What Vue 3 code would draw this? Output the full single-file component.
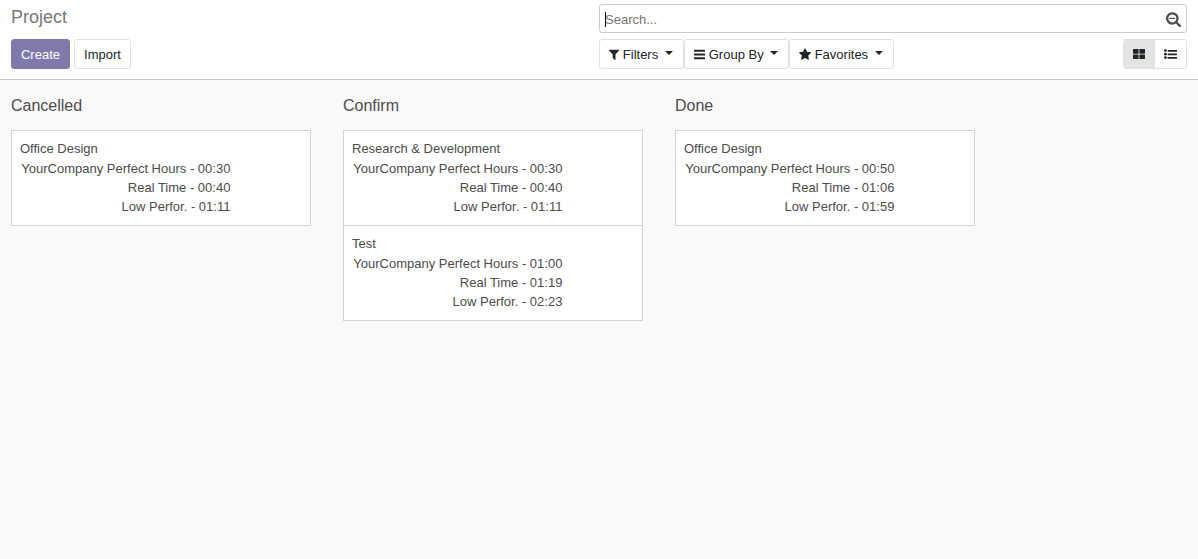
<script setup>
const bar = (y) => `M1664 ${y}v128q0 26-19 45t-45 19h-1408q-26 0-45-19t-19-45v-128q0-26 19-45t45-19h1408q26 0 45 19t19 45z`
const menus = [
  {
    label: 'Filters',
    cls: 'filters',
    box: '192 0 1408 1792',
    path: 'M1595 295q17 41-14 70l-493 493v742q0 42-39 59-13 5-25 5-27 0-45-19l-256-256q-19-19-19-45v-486l-493-493q-31-29-14-70 17-39 59-39h1280q42 0 59 39z',
  },
  { label: 'Group By', cls: 'group', box: '128 0 1536 1792', path: bar(1344) + bar(832) + bar(320) },
  {
    label: 'Favorites',
    cls: 'favorites',
    box: '64 0 1664 1792',
    path: 'M1728 647q0 22-26 48l-363 354 86 500q1 7 1 20 0 21-10.5 35.5t-30.5 14.5q-19 0-40-12l-449-236-449 236q-22 12-40 12-21 0-31.5-14.5t-10.5-35.5q0-6 2-20l86-500-364-354q-25-27-25-48 0-37 56-46l502-73 225-455q19-41 49-41t49 41l225 455 502 73q56 9 56 46z',
  },
]
const columns = [
  { title: 'Cancelled', cards: [{ name: 'Office Design', times: ['00:30', '00:40', '01:11'] }] },
  {
    title: 'Confirm',
    cards: [
      { name: 'Research & Development', times: ['00:30', '00:40', '01:11'] },
      { name: 'Test', times: ['01:00', '01:19', '02:23'] },
    ],
  },
  { title: 'Done', cards: [{ name: 'Office Design', times: ['00:50', '01:06', '01:59'] }] },
]
const labels = ['YourCompany Perfect Hours', 'Real Time', 'Low Perfor.']
</script>

<template>
  <div class="app">
    <header class="panel">
      <div class="left">
        <h1>Project</h1>
        <div class="actions">
          <button class="btn primary">Create</button>
          <button class="btn import">Import</button>
        </div>
      </div>
      <div class="right">
        <div class="search">
          <span class="caret"></span>
          <span class="placeholder">Search...</span>
          <svg class="magnifier" viewBox="64 0 1664 1792">
            <path d="M1088 800v64q0 13-9.5 22.5t-22.5 9.5h-576q-13 0-22.5-9.5t-9.5-22.5v-64q0-13 9.5-22.5t22.5-9.5h576q13 0 22.5 9.5t9.5 22.5zm128 32q0-185-131.500-316.500t-316.500-131.500-316.500 131.500-131.500 316.500 131.500 316.500 316.500 131.500 316.500-131.500 131.500-316.500zm512 832q0 53-37.500 90.500t-90.500 37.500q-54 0-90-38l-343-342q-179 124-399 124-143 0-273.500-55.500t-225-150-150-225-55.500-273.500 55.500-273.500 150-225 225-150 273.500-55.500 273.500 55.500 225 150 150 225 55.500 273.500q0 220-124 399l343 343q37 37 37 90z" />
          </svg>
        </div>
        <div class="tools">
          <div class="menus">
            <button v-for="m in menus" :key="m.label" class="btn menu" :class="m.cls">
              <svg class="icon" :viewBox="m.box"><path :d="m.path" /></svg>
              <span>{{ m.label }}</span>
              <i class="arrow"></i>
            </button>
          </div>
          <div class="switch">
            <button class="view active">
              <svg width="12" height="10" viewBox="0 0 12 10">
                <rect width="5.6" height="4.700" rx=".6" />
                <rect x="6.400" width="5.600" height="4.700" rx=".6" />
                <rect y="5.500" width="5.600" height="4.500" rx=".6" />
                <rect x="6.400" y="5.500" width="5.600" height="4.500" rx=".6" />
              </svg>
            </button>
            <button class="view">
              <svg width="13" height="10" viewBox="0 0 13 10">
                <circle cx="1.400" cy="1.600" r="1.400" />
                <circle cx="1.400" cy="5.200" r="1.400" />
                <circle cx="1.400" cy="8.600" r="1.400" />
                <rect x="3.700" y=".9" width="9.300" height="1.800" rx=".2" />
                <rect x="3.700" y="4.500" width="9.300" height="1.800" rx=".2" />
                <rect x="3.700" y="8" width="9.300" height="1.800" rx=".2" />
              </svg>
            </button>
          </div>
        </div>
      </div>
    </header>
    <main class="board">
      <section v-for="col in columns" :key="col.title" class="column">
        <h2>{{ col.title }}</h2>
        <article v-for="card in col.cards" :key="card.name" class="card">
          <div class="name">{{ card.name }}</div>
          <div class="times">
            <div v-for="(t, i) in card.times" :key="i">{{ labels[i] }} - {{ t }}</div>
          </div>
        </article>
      </section>
    </main>
  </div>
</template>

<style>
body {
  margin: 0;
  background: #f9f9f9;
}
</style>

<style scoped>
.app {
  height: 559px;
  overflow: hidden;
  font: 13px/19px "Liberation Sans", Arial, sans-serif;
  color: #4c4c4c;
  background: #f9f9f9;
}
.panel {
  box-sizing: border-box;
  height: 80px;
  display: flex;
  justify-content: space-between;
  padding: 4px 11px 0;
  background: #fff;
  border-bottom: 1px solid #c8c8c8;
}
h1 {
  margin: 0;
  height: 35px;
  font-size: 18px;
  line-height: 26px;
  font-weight: 400;
  color: #777;
}
.actions {
  display: flex;
  gap: 4px;
}
.btn {
  box-sizing: border-box;
  height: 30px;
  padding: 0;
  display: flex;
  align-items: center;
  justify-content: center;
  font: inherit;
  color: #212529;
  background: #fff;
  border: 1px solid #dee2e6;
  border-radius: 3px;
}
.primary {
  width: 59px;
  color: #fff;
  background: #8079ab;
  border-color: #8079ab;
}
.import {
  width: 57px;
}
.right {
  width: 588px;
}
.search {
  box-sizing: border-box;
  height: 29px;
  margin-bottom: 6px;
  display: flex;
  align-items: center;
  padding: 1px 5px 0;
  border: 1px solid #ccc;
  border-radius: 3px;
}
.caret {
  width: 1px;
  height: 15px;
  margin-right: -1px;
  background: #000;
}
.placeholder {
  flex: 1;
  color: #757575;
}
.magnifier {
  width: 15px;
  height: 16px;
  fill: #4c4c4c;
}
.tools {
  display: flex;
  justify-content: space-between;
}
.menus {
  display: flex;
}
.menu {
  justify-content: flex-start;
  padding-left: 9px;
}
.filters {
  width: 85px;
}
.group,
.favorites {
  width: 105px;
}
.icon {
  height: 13px;
  margin-right: 3.6px;
  fill: #212529;
}
.arrow {
  margin: -2px 0 0 6.5px;
  border: 4px solid transparent;
  border-top-color: #212529;
  border-bottom: 0;
}
.switch {
  box-sizing: border-box;
  width: 64px;
  height: 30px;
  display: flex;
  border: 1px solid #dee2e6;
  border-radius: 3px;
  overflow: hidden;
}
.view {
  box-sizing: border-box;
  width: 31px;
  padding: 0;
  display: flex;
  align-items: center;
  justify-content: center;
  border: 0;
  background: #fff;
  fill: #212529;
}
.active {
  padding-right: 1px;
  background: #e3e3e3;
}
.board {
  display: flex;
  gap: 32px;
  padding: 16px 11px;
}
.column {
  width: 300px;
}
h2 {
  margin: 0;
  height: 34px;
  font-size: 16px;
  line-height: 19px;
  font-weight: 400;
}
.card {
  box-sizing: border-box;
  height: 96px;
  padding: 8px;
  background: #fff;
  border: 1px solid #ced4da;
}
.card + .card {
  margin-top: -1px;
}
.name {
  height: 20px;
}
.times {
  width: 210.4px;
  text-align: right;
}
</style>
